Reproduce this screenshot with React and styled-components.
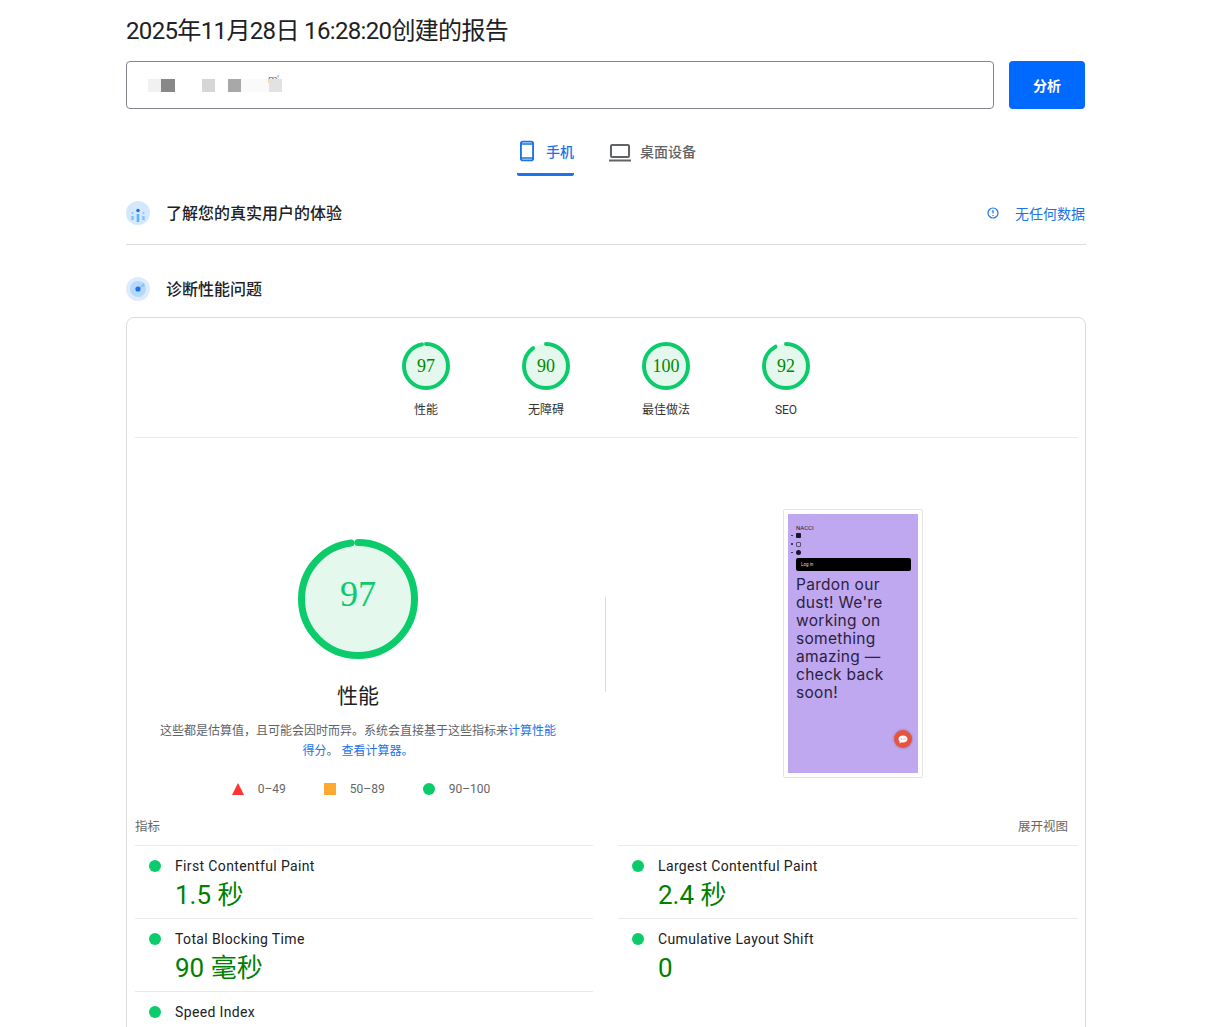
import React from 'react'
import styled, { createGlobalStyle } from 'styled-components'

const GlobalStyle = createGlobalStyle`
  html, body {
    margin: 0;
    background: #fff;
    color: #202124;
    font-family: Roboto, "Noto Sans CJK SC", sans-serif;
  }
  body { height: 1027px; overflow: hidden; }
`

const Page = styled.div`
  width: 960px;
  margin-left: 126px;
  padding-top: 14px;
`

const Title = styled.h1`
  margin: 0;
  font-size: 24px;
  line-height: 34px;
  font-weight: 400;
  letter-spacing: -.65px;
  color: #202124;
`

const SearchRow = styled.div`
  display: flex;
  gap: 15px;
  margin-top: 13px;
  width: 959px;
`

const UrlBox = styled.div`
  flex: 1;
  height: 48px;
  box-sizing: border-box;
  border: 1px solid #80868b;
  border-radius: 4px;
  display: flex;
  align-items: center;
  padding: 1px 0 0 21px;
`

const Mosaic = styled.div`
  display: flex;
  position: relative;
  height: 13px;
`

const Pixel = styled.span`
  position: relative;
  width: ${p => p.$w}px;
  margin-left: ${p => p.$gap || 0}px;
  background: ${p => p.$c};
`

const MaskedTail = styled.span`
  position: absolute;
  left: 120px;
  top: -5px;
  font-size: 11px;
  line-height: 12px;
  color: #777;
`

const AnalyzeButton = styled.button`
  width: 76px;
  height: 48px;
  border: 0;
  border-radius: 4px;
  background: #0069ff;
  color: #fff;
  font: 700 14px Roboto, "Noto Sans CJK SC", sans-serif;
`

const Tabs = styled.div`
  display: flex;
  justify-content: center;
  gap: 35px;
  margin-top: 21px;
  margin-left: 1px;
  width: 959px;
`

const Tab = styled.div`
  display: flex;
  align-items: center;
  height: 46px;
  box-sizing: border-box;
  white-space: nowrap;
  width: ${p => (p.$active ? '57px' : 'auto')};
  padding: 0 0 2px ${p => (p.$active ? 3 : 0)}px;
  gap: ${p => (p.$active ? 12 : 9)}px;
  font-size: 14px;
  font-weight: 500;
  color: ${p => (p.$active ? '#1a73e8' : '#5f6368')};
  border-bottom: 3px solid ${p => (p.$active ? '#1a73e8' : 'transparent')};
  border-radius: 0 0 2px 2px;
`

const SectionRow = styled.div`
  display: flex;
  align-items: center;
  justify-content: space-between;
  height: ${p => (p.$line ? 69 : 68)}px;
  box-sizing: border-box;
  padding-top: ${p => p.$pad}px;
  border-bottom: ${p => (p.$line ? '1px solid #dadce0' : '0')};
`

const SectionName = styled.div`
  display: flex;
  align-items: center;
  gap: 16px;
  font-size: 16px;
  font-weight: 500;
  color: #202124;
`

const SectionText = styled.span`
  margin-bottom: 2px;
`

const NoData = styled.div`
  display: flex;
  align-items: center;
  gap: 16px;
  font-size: 14px;
  color: #1a73e8;
  margin-right: 1px;
`

const Card = styled.div`
  margin-top: 4px;
  border: 1px solid #dadce0;
  border-radius: 8px;
  padding: 0 7px 0 8px;
  height: 800px;
`

const ScoreBar = styled.div`
  display: flex;
  justify-content: center;
  padding: 24px 1px 0 0;
  height: 95px;
  border-bottom: 1px solid #e8eaed;
`

const ScoreItem = styled.div`
  width: 120px;
  display: flex;
  flex-direction: column;
  align-items: center;
`

const ScoreLabel = styled.div`
  margin-top: 11px;
  font-size: 12px;
  line-height: 18px;
  color: #333;
`

const RingWrap = styled.div`
  position: relative;
  width: ${p => p.$size}px;
  height: ${p => p.$size}px;
`

const RingNumber = styled.div`
  position: absolute;
  inset: 0 0 ${p => p.$lift}px 0;
  display: flex;
  align-items: center;
  justify-content: center;
  font-family: "Liberation Serif", serif;
  font-size: ${p => p.$font}px;
  color: ${p => p.$color};
`

const Hero = styled.div`
  display: flex;
  height: 372px;
`

const HeroLeft = styled.div`
  width: 446px;
  padding-top: 101px;
  display: flex;
  flex-direction: column;
  align-items: center;
`

const HeroTitle = styled.div`
  margin-top: 21px;
  font-size: 21px;
  line-height: 32px;
  color: #202124;
`

const HeroNote = styled.p`
  margin: 9px 0 0;
  width: 404px;
  font-size: 12px;
  line-height: 20px;
  text-align: center;
  color: #5f6368;
`

const NoteLink = styled.span`
  color: #1a73e8;
`

const Legend = styled.div`
  display: flex;
  align-items: center;
  margin-top: 18px;
  margin-left: 6px;
  font-size: 12px;
  line-height: 20px;
  color: #666;
`

const LegendItem = styled.div`
  display: flex;
  align-items: center;
  gap: 14px;
  margin-right: 38px;
  &:last-child { margin-right: 0; }
`

const LegendSquare = styled.span`
  width: 12px;
  height: 12px;
  background: #ffa933;
`

const LegendDot = styled.span`
  width: 12px;
  height: 12px;
  border-radius: 50%;
  background: #0ccb6b;
`

const LegendTriangle = styled.span`
  width: 0;
  height: 0;
  border-left: 6px solid transparent;
  border-right: 6px solid transparent;
  border-bottom: 12px solid #f33;
`

const HeroRule = styled.div`
  width: 1px;
  height: 95px;
  margin: 159px 0 0 24px;
  background: #dadce0;
`

const PhoneFrame = styled.div`
  width: 140px;
  height: 269px;
  box-sizing: border-box;
  margin: 71px 0 0 177px;
  padding: 4px;
  border: 1px solid #e4e4e4;
  border-radius: 2px;
`

const PhoneScreen = styled.div`
  position: relative;
  height: 259px;
  background: #bfa8ef;
  padding: 10px 7px 0 8px;
  box-sizing: border-box;
  color: #2b2140;
`

const Brand = styled.div`
  font-size: 6px;
  line-height: 8px;
  margin-bottom: -1px;
`

const SocialRow = styled.div`
  display: flex;
  align-items: center;
  height: 8.7px;
  gap: 3px;
  margin-left: -5px;
  &::before {
    content: '';
    width: 1.5px;
    height: 1.5px;
    border-radius: 50%;
    background: #2b2140;
  }
`

const SocialIcon = styled.span`
  width: 5px;
  height: 5px;
  background: ${p => (p.$hollow ? 'transparent' : '#1c1528')};
  border: ${p => (p.$hollow ? '1px solid #5a4d78' : '0')};
  box-sizing: border-box;
  border-radius: ${p => (p.$round ? '50%' : '1px')};
`

const LoginBar = styled.div`
  margin-top: 1px;
  height: 13px;
  border-radius: 2px;
  background: #000;
  color: #ddd;
  font-size: 4.5px;
  line-height: 13px;
  padding-left: 5px;
`

const Headline = styled.div`
  margin-top: 5px;
  font-family: Inter, sans-serif;
  font-size: 15.5px;
  line-height: 18px;
  letter-spacing: .3px;
  color: #2b2140;
`

const ChatBubble = styled.div`
  position: absolute;
  right: 6px;
  bottom: 25px;
  width: 18px;
  height: 18px;
  border-radius: 50%;
  background: #e8533f;
  box-shadow: 0 0 3px rgba(0, 0, 0, .3);
  display: flex;
  align-items: center;
  justify-content: center;
`

const MetricsHead = styled.div`
  display: flex;
  justify-content: space-between;
  height: 35px;
  padding: 8px 10px 0 0;
  box-sizing: border-box;
  font-size: 12.5px;
  line-height: 18px;
  color: #666;
`

const MetricsGrid = styled.div`
  display: grid;
  grid-template-columns: 458px 460px;
  column-gap: 25px;
`

const MetricRow = styled.div`
  display: grid;
  grid-template-columns: 12px 1fr;
  grid-template-rows: 20px 30px;
  column-gap: 14px;
  height: 73px;
  box-sizing: border-box;
  padding: 10px 0 0 14px;
  border-top: 1px solid #e8eaed;
`

const MetricDot = styled.span`
  width: 12px;
  height: 12px;
  margin-top: 4px;
  border-radius: 50%;
  background: #0ccb6b;
`

const MetricName = styled.div`
  font-size: 14px;
  line-height: 20px;
  letter-spacing: .36px;
  color: #202124;
`

const MetricValue = styled.div`
  grid-column: 2;
  margin-top: 4px;
  font-size: 26px;
  line-height: 30px;
  color: #008000;
`

const ScoreRing = ({ size, stroke, score, sweep = score, font, color, lift = 0 }) => {
  const r = (size - stroke) / 2
  return (
    <RingWrap $size={size}>
      <svg width={size} height={size} viewBox={`0 0 ${size} ${size}`}>
        <circle cx={size / 2} cy={size / 2} r={r} fill="#e5f8ee" />
        <circle
          cx={size / 2}
          cy={size / 2}
          r={r}
          fill="none"
          stroke="#0ccb6b"
          strokeWidth={stroke}
          strokeLinecap={score < 100 ? 'round' : 'butt'}
          pathLength="100"
          strokeDasharray={`${sweep} 100`}
          transform={`rotate(-90 ${size / 2} ${size / 2})`}
        />
      </svg>
      <RingNumber $font={font} $color={color} $lift={lift}>{score}</RingNumber>
    </RingWrap>
  )
}

const PhoneIcon = () => (
  <svg width="15" height="22" viewBox="0 0 15 22">
    <rect x="1" y="1" width="13" height="20" rx="2" fill="none" stroke="#1a73e8" strokeWidth="2" />
    <path d="M1 3.500h13M1 18.500h13" stroke="#1a73e8" strokeWidth="1.400" />
  </svg>
)

const LaptopIcon = () => (
  <svg width="22" height="22" viewBox="0 -4 22 22">
    <rect x="2" y="1" width="18" height="12" rx="1" fill="none" stroke="#5f6368" strokeWidth="2" />
    <path d="M0 16.500h22" stroke="#5f6368" strokeWidth="2" />
  </svg>
)

const InfoIcon = () => (
  <svg width="12" height="12" viewBox="0 0 12 12">
    <circle cx="6" cy="6" r="5" fill="none" stroke="#1a73e8" strokeWidth="1.200" />
    <path d="M6 3v3.600M6 8v1.100" stroke="#1a73e8" strokeWidth="1.200" />
  </svg>
)

const UsersBadge = () => (
  <svg width="24" height="24" viewBox="0 0 24 24">
    <circle cx="12" cy="12" r="12" fill="#d4e8fc" />
    <circle cx="12" cy="9.500" r="1.800" fill="#1a73e8" />
    <path d="M12 13v8" stroke="#5db3f5" strokeWidth="2.600" />
    <path d="M6.500 15v4M17.500 15v4" stroke="#7cc3f7" strokeWidth="2.400" />
    <circle cx="6.500" cy="12" r="1" fill="#7cc3f7" />
    <circle cx="17.500" cy="12" r="1" fill="#7cc3f7" />
  </svg>
)

const RadarBadge = () => (
  <svg width="24" height="24" viewBox="0 0 24 24">
    <circle cx="12" cy="12" r="12" fill="#dcecfd" />
    <circle cx="12" cy="12" r="8" fill="#b5d8fb" />
    <path d="M12 12L18 5.500A9 9 0 0 1 18.600 9z" fill="#8cc4f8" />
    <circle cx="12" cy="12" r="2.600" fill="#1a73e8" />
  </svg>
)

const ChatIcon = () => (
  <svg width="10" height="9" viewBox="0 0 10 9">
    <path d="M5 .5c2.500 0 4.500 1.500 4.500 3.500S7.500 7.500 5 7.500c-.5 0-1 0-1.500-.2L1.500 8.500l.3-2C1 5.800.5 5 .5 4 .5 2 2.500.5 5 .5z" fill="#fff" />
    <path d="M3 4h.8M4.700 4h.8M6.400 4h.8" stroke="#e8533f" strokeWidth=".8" />
  </svg>
)

const scores = [
  { label: '性能', score: 97 },
  { label: '无障碍', score: 90 },
  { label: '最佳做法', score: 100 },
  { label: 'SEO', score: 92 },
]

const metrics = [
  { name: 'First Contentful Paint', value: '1.5 秒' },
  { name: 'Largest Contentful Paint', value: '2.4 秒' },
  { name: 'Total Blocking Time', value: '90 毫秒' },
  { name: 'Cumulative Layout Shift', value: '0' },
  { name: 'Speed Index', value: '' },
]

export default function App() {
  return (
    <Page>
      <GlobalStyle />
      <Title>2025年11月28日 16:28:20创建的报告</Title>

      <SearchRow>
        <UrlBox>
          <Mosaic>
            <Pixel $w={13} $c="#f1f1f1" />
            <Pixel $w={14} $c="#888" />
            <Pixel $w={13} $gap={27} $c="#d6d6d6" />
            <Pixel $w={13} $gap={13} $c="#a8a8a8" />
            <Pixel $w={28} $c="#fafafa" />
            <MaskedTail>m'</MaskedTail>
            <Pixel $w={13} $c="#e2e2e2" />
          </Mosaic>
        </UrlBox>
        <AnalyzeButton>分析</AnalyzeButton>
      </SearchRow>

      <Tabs>
        <Tab $active><PhoneIcon />手机</Tab>
        <Tab><LaptopIcon />桌面设备</Tab>
      </Tabs>

      <SectionRow $pad={6} $line>
        <SectionName><UsersBadge /><SectionText>了解您的真实用户的体验</SectionText></SectionName>
        <NoData><InfoIcon />无任何数据</NoData>
      </SectionRow>
      <SectionRow $pad={20}>
        <SectionName><RadarBadge /><SectionText>诊断性能问题</SectionText></SectionName>
      </SectionRow>

      <Card>
        <ScoreBar>
          {scores.map(s => (
            <ScoreItem key={s.label}>
              <ScoreRing size={48} stroke={4} score={s.score} font={18} color="#008800" />
              <ScoreLabel>{s.label}</ScoreLabel>
            </ScoreItem>
          ))}
        </ScoreBar>

        <Hero>
          <HeroLeft>
            <ScoreRing size={120} stroke={7} score={97} sweep={98} font={36} color="#0ccb6b" lift={10} />
            <HeroTitle>性能</HeroTitle>
            <HeroNote>
              这些都是估算值，且可能会因时而异。系统会直接基于这些指标来<NoteLink>计算性能得分</NoteLink>。 <NoteLink>查看计算器。</NoteLink>
            </HeroNote>
            <Legend>
              <LegendItem><LegendTriangle />0–49</LegendItem>
              <LegendItem><LegendSquare />50–89</LegendItem>
              <LegendItem><LegendDot />90–100</LegendItem>
            </Legend>
          </HeroLeft>
          <HeroRule />
          <PhoneFrame>
            <PhoneScreen>
              <Brand>NACCI</Brand>
              <SocialRow><SocialIcon /></SocialRow>
              <SocialRow><SocialIcon $hollow /></SocialRow>
              <SocialRow><SocialIcon $round /></SocialRow>
              <LoginBar>Log in</LoginBar>
              <Headline>Pardon our dust! We're working on something amazing — check back soon!</Headline>
              <ChatBubble><ChatIcon /></ChatBubble>
            </PhoneScreen>
          </PhoneFrame>
        </Hero>

        <MetricsHead>
          <span>指标</span>
          <span>展开视图</span>
        </MetricsHead>
        <MetricsGrid>
          {metrics.map(m => (
            <MetricRow key={m.name}>
              <MetricDot />
              <MetricName>{m.name}</MetricName>
              <MetricValue>{m.value}</MetricValue>
            </MetricRow>
          ))}
        </MetricsGrid>
      </Card>
    </Page>
  )
}
